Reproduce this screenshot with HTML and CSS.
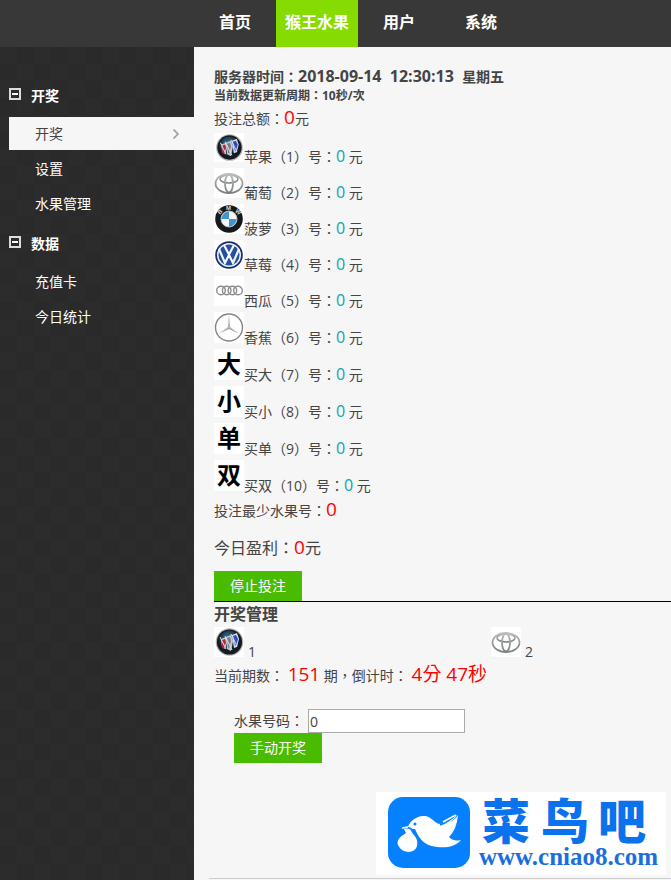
FILE: index.html
```html
<!DOCTYPE html>
<html lang="en">
  <head>
    <meta charset="UTF-8" />
    <meta name="viewport" content="width=device-width, initial-scale=1.0" />
    <title>猴王水果</title>
    <link rel="stylesheet" href="styles.css">
  </head>
  <body>
    <!-- 公用图标 -->
    <svg class="defs" width="0" height="0">
      <radialGradient id="blue" cx="45%" cy="35%">
        <stop offset="0" stop-color="#3d7fa6" />
        <stop offset="1" stop-color="#101c2c" />
      </radialGradient>
      <linearGradient id="silver" x1="0" y1="0" x2="0" y2="1">
        <stop offset="0" stop-color="#b9bdbb" />
        <stop offset="1" stop-color="#7b807e" />
      </linearGradient>
      <symbol id="buick" viewBox="0 0 30 30">
        <circle cx="15.500" cy="15" r="13.800" fill="#b4b4b6" />
        <circle cx="15.500" cy="15" r="12.600" fill="#17191d" />
        <circle cx="15.500" cy="14.500" r="10.800" fill="url(#blue)" />
        <path d="M7 12l5-2 1 5-2 7-3-2z" fill="#c9cdd2" />
        <path d="M8 13l3-1 1 3-2 7-2-2z" fill="#b3283c" />
        <path d="M12 10l5-2 2 6-2 10-4-2z" fill="#c5c8cb" />
        <path d="M13 11l3-1 1 4-2 8-1-2z" fill="#777a80" />
        <path d="M18 8l5-2 2 6-2 8-3 1z" fill="#d7dbe2" />
        <path d="M19 9l3-1 2 4-2 7-1-1z" fill="#3049c4" />
        <path d="M6 10l6 12M11 9l7 14M17 7l6 12" stroke="#e3e3e3" stroke-width="1" />
      </symbol>
      <symbol id="toyota" viewBox="0 0 30 30">
        <g fill="none" stroke="url(#silver)">
          <ellipse cx="15" cy="15.500" rx="13.500" ry="9.500" stroke-width="1.800" />
          <ellipse cx="15" cy="11" rx="9" ry="4" stroke-width="1.600" />
          <ellipse cx="15" cy="15.500" rx="4" ry="9" stroke-width="1.800" />
        </g>
      </symbol>
    </svg>

    <header class="header">
      <nav class="nav">
        <a href="#">首页</a>
        <a href="#" class="on">猴王水果</a>
        <a href="#">用户</a>
        <a href="#">系统</a>
      </nav>
    </header>

    <div class="wrap">
      <aside class="side">
        <h3>
          <svg width="12" height="12"><path d="M1 1h10v10H1z" fill="none" stroke="#ddd" stroke-width="2" /><path d="M3 6h6" stroke="#fff" stroke-width="2" /></svg>
          开奖
        </h3>
        <ul>
          <li>
            <a href="#" class="on">开奖
              <svg width="8" height="12"><path d="M1.500 1.500L6 6l-4.500 4.500" fill="none" stroke="#999" stroke-width="1.500" /></svg>
            </a>
          </li>
          <li><a href="#">设置</a></li>
          <li><a href="#">水果管理</a></li>
        </ul>
        <h3>
          <svg width="12" height="12"><path d="M1 1h10v10H1z" fill="none" stroke="#ddd" stroke-width="2" /><path d="M3 6h6" stroke="#fff" stroke-width="2" /></svg>
          数据
        </h3>
        <ul>
          <li><a href="#">充值卡</a></li>
          <li><a href="#">今日统计</a></li>
        </ul>
      </aside>

      <main class="main">
        <section class="content">
          <p class="time">服务器时间：<span>2018-09-14&nbsp; 12:30:13&nbsp; </span>星期五</p>
          <p class="cycle">当前数据更新周期：10秒/次</p>
          <p class="sum">投注总额：<b class="red">0</b>元</p>

          <ul class="fruits">
            <li class="short"><svg class="pic"><use href="#buick" /></svg><p>苹果（1）号：<b>0</b> 元</p></li>
            <li><svg class="pic"><use href="#toyota" /></svg><p>葡萄（2）号：<b>0</b> 元</p></li>
            <li>
              <svg class="pic" viewBox="0 0 30 30">
                <circle cx="15" cy="15" r="13.800" fill="#16181b" />
                <circle cx="15" cy="15" r="8" fill="#f4f7fa" stroke="#b8bcc0" />
                <path d="M15 15V7.500A7.500 7.500 0 0 0 7.500 15zM15 15v7.500a7.500 7.500 0 0 0 7.500-7.500z" fill="#4395cf" />
                <g class="bmw"><text x="4" y="10" transform="rotate(-42 6 8)">B</text><text x="12" y="6">M</text><text x="21" y="9" transform="rotate(42 23 8)">W</text></g>
              </svg>
              <p>菠萝（3）号：<b>0</b> 元</p>
            </li>
            <li>
              <svg class="pic" viewBox="0 0 30 30">
                <circle cx="15" cy="15" r="13.800" fill="#1b2c66" />
                <circle cx="15" cy="15" r="11.300" fill="#24509e" stroke="#e8eef8" stroke-width="1.500" />
                <path d="M10 5l5 9.500L20 5M5 9l6 14 4-8 4 8 6-14" fill="none" stroke="#f2f6fb" stroke-width="2.200" />
              </svg>
              <p>草莓（4）号：<b>0</b> 元</p>
            </li>
            <li>
              <svg class="pic" viewBox="0 0 30 30">
                <g fill="none" stroke="#8c8c8c" stroke-width="1.400"><circle cx="7" cy="14.500" r="4.300" /><circle cx="12.700" cy="14.500" r="4.300" /><circle cx="18.400" cy="14.500" r="4.300" /><circle cx="24" cy="14.500" r="4.300" /></g>
              </svg>
              <p>西瓜（5）号：<b>0</b> 元</p>
            </li>
            <li class="tall">
              <svg class="pic" viewBox="0 0 30 31">
                <circle cx="15" cy="15.500" r="13.500" fill="none" stroke="#858585" stroke-width="1.400" />
                <path d="M15 3l1 12L25 21.500l-10-4.500L5 21.500l9-6.500z" fill="#8d8d8d" />
                <path d="M15 5v10.500L6 20.500M15 15.500l9 5" fill="none" stroke="#f2f2f2" stroke-width=".6" />
              </svg>
              <p>香蕉（6）号：<b>0</b> 元</p>
            </li>
            <li class="tall"><span class="pic word">大</span><p>买大（7）号：<b>0</b> 元</p></li>
            <li class="tall"><span class="pic word">小</span><p>买小（8）号：<b>0</b> 元</p></li>
            <li class="tall"><span class="pic word">单</span><p>买单（9）号：<b>0</b> 元</p></li>
            <li class="tall"><span class="pic word">双</span><p>买双（10）号：<b>0</b> 元</p></li>
          </ul>

          <p class="least">投注最少水果号：<b class="red">0</b></p>
          <p class="profit">今日盈利：<b class="red">0</b>元</p>
          <button type="button" class="btn">停止投注</button>
        </section>

        <section class="manage">
          <h2>开奖管理</h2>
          <div class="cars">
            <div><svg class="pic"><use href="#buick" /></svg> <span>1</span></div>
            <div><svg class="pic"><use href="#toyota" /></svg> <span>2</span></div>
          </div>
          <p class="issue">当前期数： <b class="red">151</b> 期，倒计时： <b class="red">4分 47秒</b></p>
          <form class="open">
            <div class="field">
              <label for="code">水果号码：</label>
              <input type="text" id="code" value="0" />
            </div>
            <button type="button" class="btn">手动开奖</button>
          </form>
        </section>

        <footer class="foot">
          <svg class="logo" viewBox="0 0 290 83" width="290" height="83">
            <rect width="290" height="83" fill="#fff" />
            <rect x="12" y="5" width="82" height="71" rx="15" fill="#0580ff" />
            <path d="M31 37c2-7 9-14 18-13 7 1 9 7 15 8 5 0 13-6 17-9-2 3-4 5-7 7 3-1 6-4 8-7-1 10-4 17-9 22 4 4 8 4 12 3-6 7-15 8-24 7-12-1-18-8-22-18z" fill="#fff" />
            <path d="M27 35l7 2 3 5c4 4 5 8 4 12-2 8-15 8-19-1-2-5 3-9 8-12z" fill="#fff" />
            <path d="M28 36c4-1 7 0 9 3M64 33c6-2 12-6 17-12" fill="none" stroke="#0580ff" stroke-width="1.500" />
            <path d="M26 36l6-1M67 30l9-5 4-2" fill="none" stroke="#fff" stroke-width="1.500" />
            <circle cx="39" cy="32" r="1.500" fill="#0580ff" />
            <g class="logo-name"><text x="130" y="47">菜</text><text x="189" y="47">鸟</text><text x="246" y="47">吧</text></g>
            <text x="103" y="73" class="logo-url">www.cniao8.com</text>
          </svg>
        </footer>
      </main>
    </div>
  </body>
</html>
```
FILE: styles.css
```css
* {
  margin: 0;
  padding: 0;
  box-sizing: border-box;
  text-decoration: none;
}
body {
  display: flex;
  flex-direction: column;
  min-height: 100vh;
  font: 14px/20px "Open Sans", "Noto Sans CJK TC", sans-serif;
  color: #444;
  background: #f6f6f6;
}
ul {
  list-style: none;
}
.defs {
  position: absolute;
}

/* 顶部导航 */
.header {
  height: 47px;
  padding-left: 194px;
  background: #383838;
}
.nav {
  display: flex;
}
.nav a {
  width: 82px;
  line-height: 44px;
  height: 47px;
  text-align: center;
  font-size: 16px;
  font-weight: bold;
  color: #fff;
}
.nav .on {
  background: #86db00;
}

.wrap {
  flex: 1;
  display: flex;
}

/* 左侧菜单 */
.side {
  flex: none;
  width: 194px;
  padding: 27px 0 0 9px;
  background: repeating-conic-gradient(#2a2a2a 0 25%, #2c2c2c 0 50%) 0 0 / 34px 34px;
}
.side h3 {
  display: flex;
  align-items: center;
  gap: 10px;
  height: 43px;
  font-size: 14px;
  color: #fff;
}
.side h3 svg {
  margin-bottom: 4px;
}
.side li {
  padding-bottom: 2px;
}
.side a {
  display: flex;
  align-items: center;
  justify-content: space-between;
  height: 33px;
  padding: 0 14px 0 26px;
  color: #fff;
}
.side .on {
  color: #444;
  background: #f6f6f6;
}

/* 右侧内容 */
.main {
  flex: 1;
  min-width: 0;
  display: flex;
  flex-direction: column;
}
.content {
  padding: 20px 0 0 20px;
}
.time {
  font-weight: bold;
}
.time span {
  font-size: 16px;
  line-height: 1;
}
.cycle {
  font-size: 12px;
  line-height: 18px;
  font-weight: bold;
}
.sum {
  line-height: 28px;
}
.red {
  font-size: 19px;
  line-height: 1;
  font-weight: normal;
  color: #f00;
}
.fruits li {
  display: flex;
  align-items: flex-end;
  height: 36px;
}
.fruits .short {
  height: 35px;
}
.fruits .tall {
  height: 37px;
}
.fruits p {
  padding-bottom: 1px;
}
.fruits b {
  font-size: 16px;
  line-height: 1;
  font-weight: normal;
  color: #0aa5b4;
}
.pic {
  flex: none;
  align-self: flex-start;
  width: 30px;
  height: 30px;
  background: #fff;
}
.short .pic {
  height: 29px;
}
.tall .pic {
  height: 31px;
}
.word {
  font-size: 24px;
  line-height: 30px;
  font-weight: bold;
  text-align: center;
  color: #000;
}
.bmw {
  font: bold 6px "Liberation Sans", sans-serif;
  fill: #ddd;
}
.least {
  line-height: 28px;
}
.profit {
  font-size: 16px;
  line-height: 46px;
}
.btn {
  display: block;
  width: 88px;
  height: 30px;
  border: 0;
  font: inherit;
  color: #fff;
  background: #4abc00;
  cursor: pointer;
}

.manage {
  margin-left: 20px;
  border-top: 1px solid #000;
}
.manage h2 {
  font-size: 16px;
  line-height: 25px;
}
.cars {
  display: flex;
}
.cars div {
  display: flex;
  align-items: flex-end;
  gap: 4px;
  width: 277px;
  height: 35px;
}
.cars div:last-child {
  width: auto;
}
.issue {
  line-height: 28px;
}
.open {
  padding: 19px 0 0 20px;
}
.field {
  display: flex;
  align-items: center;
  gap: 4px;
}
.field input {
  width: 157px;
  height: 24px;
  padding: 0 1px;
  border: 1px solid #a9a9a9;
  font: inherit;
  color: #444;
  background: #fff;
}

.foot {
  display: flex;
  justify-content: flex-end;
  margin: auto 0 1px 15px;
  padding: 20px 5px 3px 0;
  border-bottom: 1px solid #ccc;
}
.logo {
  overflow: visible;
}
.logo-name {
  font: 900 48px "Noto Sans CJK SC", sans-serif;
  text-anchor: middle;
  fill: #0a72ec;
}
.logo-url {
  font: bold 25px "Liberation Serif", serif;
  fill: #1b6fdc;
}
```
